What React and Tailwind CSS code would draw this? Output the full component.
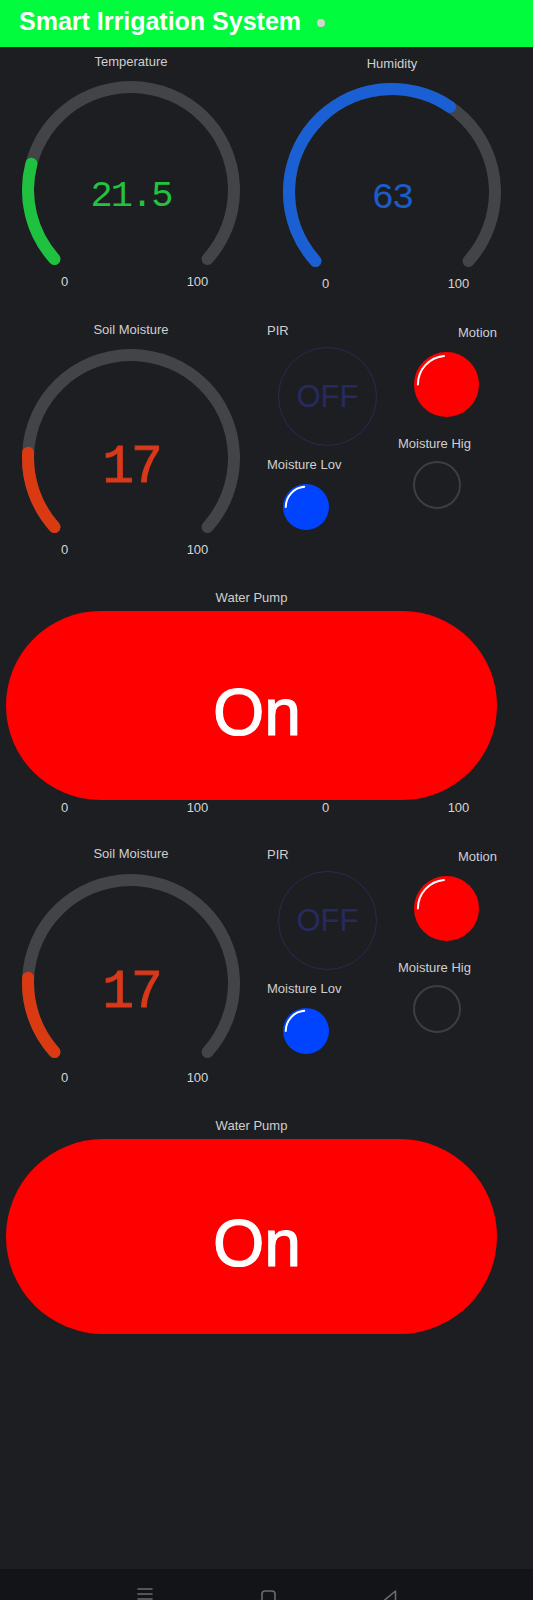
import React from 'react';

const CX = 110;
const CY = 109;
const R = 103;

const point = (deg) => {
    const a = (deg * Math.PI) / 180;
    return [CX + R * Math.cos(a), CY + R * Math.sin(a)];
};

// gauge arc runs 264deg clockwise, starting bottom-left
const arcPath = (f) => {
    const start = 138;
    const sweep = 264 * f;
    const [x1, y1] = point(start);
    const [x2, y2] = point(start + sweep);
    return `M ${x1} ${y1} A ${R} ${R} 0 ${sweep > 180 ? 1 : 0} 1 ${x2} ${y2}`;
};

const label = "font-['Liberation_Sans',Arial,sans-serif] text-[13px] leading-4 text-[#cfcfcf]";

const Scale = ({ className = '' }) => (
    <div className={`mx-auto flex w-[173px] justify-between ${label} text-[#d6d6d6] ${className}`}>
        <span className="w-10 text-center">0</span>
        <span className="w-10 text-center">100</span>
    </div>
);

const Gauge = ({ title, value, color, valueClass, gaugeMt = 'mt-[11px]', scaleMt = 'mt-[7px]' }) => (
    <div className="flex w-[220px] flex-col">
        <div className={`${label} text-center`}>{title}</div>
        <div className={`relative h-[186px] w-[220px] ${gaugeMt}`}>
            <svg width="220" height="186" viewBox="0 0 220 186">
                <path d={arcPath(1)} fill="none" stroke="#434448" strokeWidth="12" strokeLinecap="round" />
                <path d={arcPath(value / 100)} fill="none" stroke={color} strokeWidth="12" strokeLinecap="round" />
            </svg>
            <div className={`absolute left-0 right-0 text-center font-['Liberation_Mono',monospace] leading-none ${valueClass}`}>
                {value}
            </div>
        </div>
        <Scale className={scaleMt} />
    </div>
);

const Led = ({ size, color }) => {
    const r = size / 2;
    const hr = r * 0.88;
    const a = (265 * Math.PI) / 180;
    const ex = r + hr * Math.cos(a);
    const ey = r + hr * Math.sin(a);
    return (
        <svg width={size} height={size} viewBox={`0 0 ${size} ${size}`} className="block">
            <circle cx={r} cy={r} r={r} fill={color} />
            <path
                d={`M ${r - hr} ${r} A ${hr} ${hr} 0 0 1 ${ex} ${ey}`}
                fill="none"
                stroke="#ffffff"
                strokeWidth="2"
                strokeLinecap="round"
            />
        </svg>
    );
};

const SoilRow = ({ gaugeMt, scaleMt }) => (
    <div className="flex pl-[21px]">
        <Gauge
            title="Soil Moisture"
            value={17}
            color="#d93a12"
            valueClass="top-[93px] text-[53px] tracking-[-3px] text-[#d8391a] [-webkit-text-stroke:0.8px_#d8391a]"
            gaugeMt={gaugeMt}
            scaleMt={scaleMt}
        />
        <div className="ml-[26px] flex">
            <div className="flex w-[131px] flex-col">
                <div className={`mt-[1px] ${label}`}>PIR</div>
                <div className="ml-[11px] mt-[8px] flex h-[99px] w-[99px] items-center justify-center rounded-full border-[1.5px] border-[#282a52]">
                    <span className="font-['Liberation_Sans',Arial,sans-serif] text-[31px] leading-none text-[#272a5e]">OFF</span>
                </div>
                <div className={`mt-[11px] whitespace-nowrap ${label}`}>Moisture Lov</div>
                <div className="ml-[16px] mt-[11px]">
                    <Led size={46} color="#0044ff" />
                </div>
            </div>
            <div className="flex w-[99px] flex-col">
                <div className={`mt-[3px] text-right ${label}`}>Motion</div>
                <div className="ml-[16px] mt-[11px]">
                    <Led size={65} color="#ff0000" />
                </div>
                <div className={`mt-[19px] whitespace-nowrap ${label}`}>Moisture Hig</div>
                <div className="ml-[15px] mt-[9px] h-[48px] w-[48px] rounded-full border-2 border-[#3d3e42]" />
            </div>
        </div>
    </div>
);

const Pump = ({ height }) => (
    <div className="pl-[6px] pr-[36px]">
        <div className={`${label} text-center`}>Water Pump</div>
        <div className={`mt-[5px] flex items-center justify-center rounded-full bg-[#ff0000] pl-[11px] pt-[13px] ${height}`}>
            <span className="font-['Liberation_Sans',Arial,sans-serif] text-[66px] font-normal leading-none text-white [-webkit-text-stroke:1.2px_#fff]">
                On
            </span>
        </div>
    </div>
);

export default function App() {
    return (
        <div className="flex h-[1600px] flex-col bg-[#1d1e22]">
            <div className="flex h-[47px] items-start bg-[#00fc3c] pl-[19px] pt-[6px]">
                <div className="flex h-[30px] items-center">
                    <h1 className="font-['Liberation_Sans',Arial,sans-serif] text-[25px] font-bold leading-[30px] text-white">
                        Smart Irrigation System
                    </h1>
                    <span className="ml-[16px] mt-[3px] h-2 w-2 rounded-full bg-[#d4d4d4]" />
                </div>
            </div>

            <div className="flex-1">
                <div className="mt-[7px] flex gap-[41px] pl-[21px]">
                    <Gauge
                        title="Temperature"
                        value={21.5}
                        color="#1fc23f"
                        valueClass="top-[97px] text-[37px] tracking-[-2px] text-[#22c33e]"
                    />
                    <div className="mt-[2px]">
                        <Gauge
                            title="Humidity"
                            value={63}
                            color="#1a5fd4"
                            valueClass="top-[97px] text-[37px] tracking-[-2px] text-[#1b5cc8]"
                        />
                    </div>
                </div>

                <div className="mt-[30px]">
                    <SoilRow gaugeMt="mt-[11px]" scaleMt="mt-[7px]" />
                </div>

                <div className="mt-[32px]">
                    <Pump height="h-[189px]" />
                </div>

                <div className="flex gap-[41px] pl-[21px]">
                    <div className="w-[220px]"><Scale /></div>
                    <div className="w-[220px]"><Scale /></div>
                </div>

                <div className="mt-[30px]">
                    <SoilRow gaugeMt="mt-[12px]" scaleMt="mt-[10px]" />
                </div>

                <div className="mt-[32px]">
                    <Pump height="h-[195px]" />
                </div>
            </div>

            <div className="flex h-[31px] items-start overflow-hidden bg-[#131417] pl-[137px] pt-[18px]">
                <svg width="16" height="16" viewBox="0 0 16 16" className="mt-[1px]">
                    <path d="M1 1h14M1 6h14M1 11h14" stroke="#6b6b6b" strokeWidth="1.6" strokeLinecap="round" />
                </svg>
                <svg width="15" height="20" viewBox="0 0 15 20" className="ml-[108px] mt-[3px]">
                    <rect x="1" y="1" width="13" height="22" rx="3" fill="none" stroke="#6b6b6b" strokeWidth="1.6" />
                </svg>
                <svg width="15" height="20" viewBox="0 0 15 20" className="ml-[106px] mt-[3px]">
                    <path d="M13.5 1 L1.5 11 L13.5 21 Z" fill="none" stroke="#6b6b6b" strokeWidth="1.6" strokeLinejoin="round" />
                </svg>
            </div>
        </div>
    );
}
